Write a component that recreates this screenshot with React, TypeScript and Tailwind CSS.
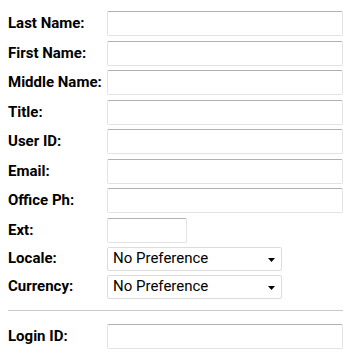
const textFields = ['Last Name:', 'First Name:', 'Middle Name:', 'Title:', 'User ID:', 'Email:', 'Office Ph:'];

function Label({ children }: { children: string }) {
  return <label className="w-[99px] shrink-0 whitespace-nowrap text-[15px] font-bold text-black">{children}</label>;
}

function TextBox({ wide = true }: { wide?: boolean }) {
  return (
    <input
      type="text"
      className={`${wide ? 'w-[236px]' : 'w-[80px]'} h-[25px] rounded-[2px] border border-[#e3e3e3] border-t-[#b0b0b0] bg-white px-1 outline-none`}
    />
  );
}

function Select() {
  return (
    <div className="relative flex h-[24px] w-[175px] items-center rounded-[2px] border border-[#dcdcdc] bg-white pl-[5px] text-[15px] text-black">
      No Preference
      <svg className="absolute right-[6px] top-[10px]" width="7" height="4" viewBox="0 0 7 4">
        <path d="M0 0h7L3.5 4z" fill="#000" />
      </svg>
    </div>
  );
}

export default function App() {
  return (
    <div className="w-[352px] h-[363px] bg-white pl-[8px] pt-[11px] font-['Roboto',sans-serif]">
      <div className="flex flex-col gap-[4.5px]">
        {textFields.map((f) => (
          <div key={f} className="flex items-center">
            <Label>{f}</Label>
            <TextBox />
          </div>
        ))}
        <div className="flex items-center">
          <Label>Ext:</Label>
          <TextBox wide={false} />
        </div>
      </div>
      <div className="mt-[4px] flex flex-col gap-[4px]">
        <div className="flex items-center">
          <Label>Locale:</Label>
          <Select />
        </div>
        <div className="flex items-center">
          <Label>Currency:</Label>
          <Select />
        </div>
      </div>
      <hr className="mt-[11px] w-[335px] border-t border-[#c8c8c8]" />
      <div className="mt-[13px] flex items-center">
        <Label>Login ID:</Label>
        <TextBox />
      </div>
    </div>
  );
}
